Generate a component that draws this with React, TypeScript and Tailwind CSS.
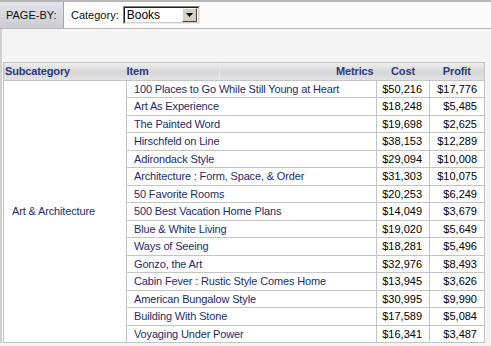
const rows: [string, string, string][] = [
  ["100 Places to Go While Still Young at Heart", "$50,216", "$17,776"],
  ["Art As Experience", "$18,248", "$5,485"],
  ["The Painted Word", "$19,698", "$2,625"],
  ["Hirschfeld on Line", "$38,153", "$12,289"],
  ["Adirondack Style", "$29,094", "$10,008"],
  ["Architecture : Form, Space, & Order", "$31,303", "$10,075"],
  ["50 Favorite Rooms", "$20,253", "$6,249"],
  ["500 Best Vacation Home Plans", "$14,049", "$3,679"],
  ["Blue & White Living", "$19,020", "$5,649"],
  ["Ways of Seeing", "$18,281", "$5,496"],
  ["Gonzo, the Art", "$32,976", "$8,493"],
  ["Cabin Fever : Rustic Style Comes Home", "$13,945", "$3,626"],
  ["American Bungalow Style", "$30,995", "$9,990"],
  ["Building With Stone", "$17,589", "$5,084"],
  ["Voyaging Under Power", "$16,341", "$3,487"],
];

function PageBy() {
  return (
    <div className="flex h-[29px] border-t-2 border-b border-t-[#b4b4b4] border-b-[#b8b8b8] bg-[#fbfbfb]">
      <div className="flex w-[64px] items-center border-r border-r-[#a4a5ad] bg-gradient-to-b from-[#e2e3e8] to-[#cbccd3] pl-[6px] text-[11px] text-[#111]">
        PAGE-BY:
      </div>
      <div className="flex items-center pl-[7px] text-[11px] text-[#111]">
        <span className="mr-[4px]">Category:</span>
        <div className="flex h-[18px] w-[77px] items-center border border-t-[#808080] border-l-[#808080] border-r-[#e8e8e8] border-b-[#e8e8e8]">
          <div className="flex h-full flex-1 items-center border border-t-[#202020] border-l-[#202020] border-r-[#d4d0c8] border-b-[#d4d0c8] bg-white">
            <span className="flex-1 pl-[2px] text-[12px] leading-none text-black">Books</span>
            <div className="mr-[1px] flex h-[14px] w-[15px] items-center justify-center border border-t-white border-l-white border-r-[#404040] border-b-[#404040] bg-[#d4d0c8]">
              <svg width="7" height="4" viewBox="0 0 7 4">
                <path d="M0 0h7L3.5 4z" fill="#000" />
              </svg>
            </div>
          </div>
        </div>
      </div>
    </div>
  );
}

function Grid() {
  return (
    <table className="ml-[3px] w-[481px] table-fixed border-collapse text-[11px] tracking-[-0.15px]">
      <colgroup>
        <col className="w-[123px]" />
        <col className="w-[250px]" />
        <col className="w-[53px]" />
        <col className="w-[55px]" />
      </colgroup>
      <thead>
        <tr className="h-[17px] bg-gradient-to-b from-[#eeeeee] via-[#d6d6d8] to-[#e4e4e6] font-bold text-[#2a3c7c]">
          <th className="border-y border-l border-[#c4c4c4] pl-[1px] text-left font-bold">Subcategory</th>
          <th className="border-y border-[#c4c4c4] p-0 font-bold">
            <div className="flex">
              <span className="w-[93px] border-r border-r-[#e8e8ea] text-left">Item</span>
              <span className="flex-1 pr-[3px] text-right">Metrics</span>
            </div>
          </th>
          <th className="border-y border-[#c4c4c4] text-center font-bold">Cost</th>
          <th className="border-y border-r border-[#c4c4c4] text-center font-bold">Profit</th>
        </tr>
      </thead>
      <tbody className="bg-white">
        {rows.map(([item, cost, profit], i) => (
          <tr key={item} className="h-[17.5px]">
            {i === 0 && (
              <td rowSpan={rows.length} className="border border-[#c4c4c4] pl-[8px] text-[#1e2c6a]">
                Art &amp; Architecture
              </td>
            )}
            <td className="truncate border border-[#c4c4c4] pl-[7px] text-[#1e2c6a]">{item}</td>
            <td className="border border-[#c4c4c4] pr-[7px] text-right tracking-normal text-black">{cost}</td>
            <td className="border border-[#c4c4c4] pr-[7px] text-right tracking-normal text-black">{profit}</td>
          </tr>
        ))}
      </tbody>
    </table>
  );
}

export default function App() {
  return (
    <div className="h-[346px] w-[491px] overflow-hidden bg-[#f4f4f4] font-['Liberation_Sans',Arial,sans-serif]">
      <PageBy />
      <div className="h-[33px] border-l-2 border-l-[#d0d0d0]" />
      <div className="border-l-2 border-l-[#d0d0d0]">
        <div className="-ml-[2px]">
          <Grid />
        </div>
      </div>
    </div>
  );
}
